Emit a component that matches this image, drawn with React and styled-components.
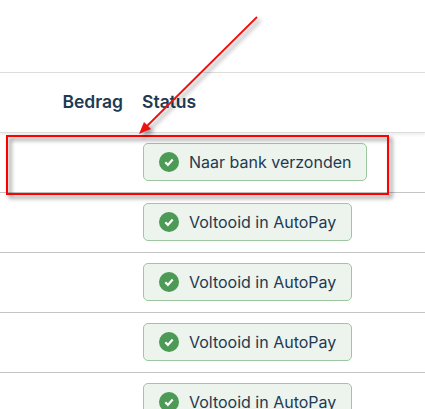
import styled, { createGlobalStyle } from "styled-components";

const rows = [
  "Naar bank verzonden",
  "Voltooid in AutoPay",
  "Voltooid in AutoPay",
  "Voltooid in AutoPay",
  "Voltooid in AutoPay",
];

const CheckIcon = () => (
  <svg width="20" height="20" viewBox="0 0 20 20" style={{ flex: "none" }}>
    <circle cx="10" cy="10" r="10" fill="#4c9a55" />
    <path d="M6.3 10.3l2.6 2.6 4.8-5.4" fill="none" stroke="#fff" strokeWidth="2.2" />
  </svg>
);

export default function App() {
  return (
    <Page>
      <GlobalStyle />
      <TopBar />
      <HeaderRow>
        <AmountHead>Bedrag</AmountHead>
        <StatusHead>Status</StatusHead>
      </HeaderRow>
      {rows.map((label, i) => (
        <Row key={i}>
          <Badge>
            <CheckIcon />
            {label}
          </Badge>
        </Row>
      ))}
      <Highlight />
      <Arrow width="425" height="409" viewBox="0 0 425 409">
        <path d="M257 17L146 127" stroke="#f01010" strokeWidth="1.8" fill="none" />
        <path d="M139 134L144 122L151 129Z" fill="#f01010" />
      </Arrow>
    </Page>
  );
}

const GlobalStyle = createGlobalStyle`
  html, body {
    margin: 0;
    background: #fff;
    overflow: hidden;
  }
`;
const Page = styled.div`
  position: relative;
  width: 425px;
  height: 409px;
  overflow: hidden;
  font-family: Inter, "Liberation Sans", sans-serif;
  color: #1d3b52;
`;
const TopBar = styled.div`
  height: 72px;
  border-bottom: 1px solid #dddddd;
`;
const HeaderRow = styled.div`
  display: flex;
  align-items: center;
  box-sizing: border-box;
  height: 60px;
  padding-bottom: 2px;
  border-bottom: 1px solid #dddddd;
  font-size: 17.5px;
  font-weight: 600;
  box-shadow: 0 2px 3px rgba(0, 0, 0, 0.07);
`;
const AmountHead = styled.div`
  width: 123px;
  text-align: right;
`;
const StatusHead = styled.div`
  margin-left: 19px;
`;
const Row = styled.div`
  display: flex;
  align-items: flex-start;
  box-sizing: border-box;
  height: 60px;
  padding: 10px 0 0 143px;
  border-bottom: 1px solid #c4c4c4;
`;
const Badge = styled.div`
  display: flex;
  align-items: center;
  gap: 10px;
  box-sizing: border-box;
  height: 38px;
  padding: 0 15px;
  background: #edf3ed;
  border: 1px solid #9cc79f;
  border-radius: 5px;
  font-size: 16px;
  white-space: nowrap;
`;
const Highlight = styled.div`
  position: absolute;
  left: 6px;
  top: 135px;
  box-sizing: border-box;
  width: 383px;
  height: 60px;
  border: 2px solid #ff0000;
  filter: drop-shadow(0 0 0.4px #ff0000) drop-shadow(3px 3px 2px rgba(0, 0, 0, 0.55));
`;
const Arrow = styled.svg`
  position: absolute;
  left: 0;
  top: 0;
  filter: drop-shadow(3px 3px 2px rgba(0, 0, 0, 0.4));
`;
